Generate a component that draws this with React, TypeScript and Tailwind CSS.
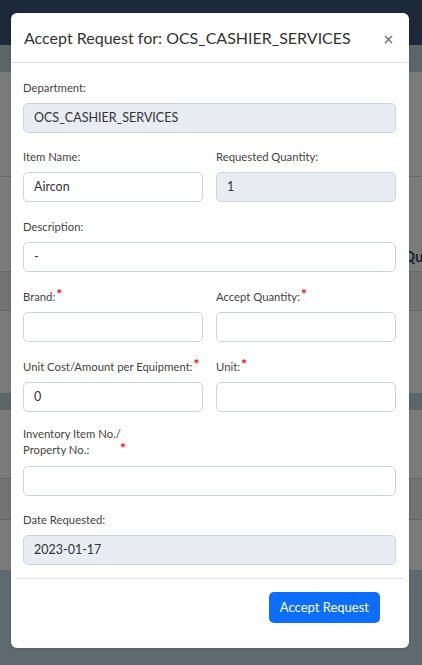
import React from 'react'

const font = { fontFamily: 'Lato, "Noto Sans", sans-serif' }

function Req() {
  return <span className="relative -top-[3px] ml-px text-[14px] font-bold leading-none text-[#ff0000]">*</span>
}

function Field({
  label,
  value,
  readOnly,
  required,
  className = '',
}: {
  label: React.ReactNode
  value?: string
  readOnly?: boolean
  required?: boolean
  className?: string
}) {
  return (
    <div className={className}>
      <label className="mb-[7px] flex h-4 items-center whitespace-nowrap text-[11.3px] leading-4 text-[#444]">
        {label}
        {required && <Req />}
      </label>
      <div
        className={`flex h-[30px] items-center rounded-[5px] border border-[#ced4da] px-[10px] text-[12.5px] text-[#333] ${
          readOnly ? 'bg-[#e9ecf3]' : 'bg-white'
        }`}
      >
        {value}
      </div>
    </div>
  )
}

export default function App() {
  return (
    <div className="relative h-[665px] w-[422px] overflow-hidden bg-[#7b7b7b]" style={font}>
      {/* page behind the backdrop */}
      <div className="h-[45px] bg-[#1d2938]" />
      <div className="h-[27px] bg-[#5c6668]" />
      <div className="h-[105px] border-b border-[#666]" />
      <div className="flex h-[95px] items-end justify-end border-b border-[#666] pb-[4px]">
        <span className="mr-[-9px] text-[15px] font-bold text-[#1b2533]">Qua</span>
      </div>
      <div className="h-[39px] border-b border-[#666] bg-[#737373]" />
      <div className="h-[82px]" />
      <div className="h-[17px] bg-[#5c6668]" />
      <div className="h-[69px] border-b border-[#666]" />
      <div className="h-[41px] border-b border-[#666] bg-[#737373]" />
      <div className="h-[50px]" />
      <div className="h-[95px] bg-[#5f6a70]" />

      {/* modal */}
      <div className="absolute left-[11px] top-[13px] w-[398px] rounded-[6px] bg-white shadow-sm">
        <div className="flex h-[50px] items-center justify-between border-b border-[#dee2e6] pl-[13px] pr-[16px]">
          <h2 className="whitespace-nowrap text-[16px] text-[#333]">Accept Request for: OCS_CASHIER_SERVICES</h2>
          <svg width="9" height="9" viewBox="0 0 9 9" className="mt-[3px]">
            <path d="M1 1L8 8M8 1L1 8" stroke="#6c6c6c" strokeWidth="1.4" />
          </svg>
        </div>

        <div className="pl-3 pr-[13px] pt-[17px] pb-[13px]">
          <Field label="Department:" value="OCS_CASHIER_SERVICES" readOnly className="mb-4" />
          <div className="mb-[17px] grid grid-cols-2 gap-x-[13px]">
            <Field label="Item Name:" value="Aircon" />
            <Field label="Requested Quantity:" value="1" readOnly />
          </div>
          <Field label="Description:" value="-" className="mb-[17px]" />
          <div className="mb-[17px] grid grid-cols-2 gap-x-[13px]">
            <Field label="Brand:" required />
            <Field label="Accept Quantity:" required />
          </div>
          <div className="mb-[14px] grid grid-cols-2 gap-x-[13px]">
            <Field label="Unit Cost/Amount per Equipment:" value="0" required />
            <Field label="Unit:" required />
          </div>
          <div className="mb-4">
            <div className="mb-2 flex items-end text-[11.3px] leading-4 text-[#444]">
              <span className="w-[96px] whitespace-nowrap">
                Inventory Item No./
                <br />
                Property No.:
              </span>
              <Req />
            </div>
            <div className="h-[30px] rounded-[5px] border border-[#ced4da] bg-white" />
          </div>
          <Field label="Date Requested:" value="2023-01-17" readOnly />
        </div>

        <div className="mx-[6px] flex justify-end border-t border-[#dee2e6] pr-[23px] pt-[13px] pb-[25px]">
          <button className="h-[31px] rounded-[5px] bg-[#0d6efd] px-[11px] text-[13px] text-white">
            Accept Request
          </button>
        </div>
      </div>
    </div>
  )
}
